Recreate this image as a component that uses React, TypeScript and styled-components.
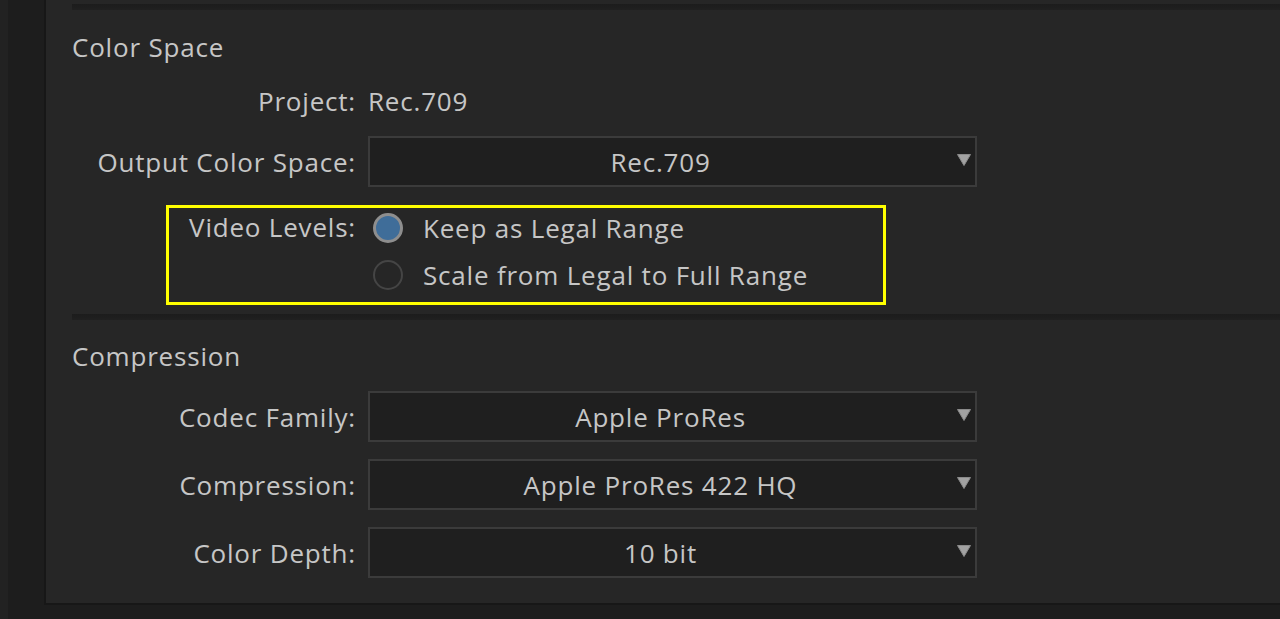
import React from 'react';
import styled, { createGlobalStyle } from 'styled-components';

const GlobalStyle = createGlobalStyle`
  html, body {
    margin: 0;
    padding: 0;
    background: #1d1d1d;
    overflow: hidden;
  }
  body {
    font-family: "Open Sans", "Noto Sans", "DejaVu Sans", sans-serif;
    color: #c6c6c6;
    letter-spacing: 0.8px;
  }
`;

const FormRow = ({ label, gap, children }: { label: string; gap: number; children: React.ReactNode }) => (
  <Row $gap={gap}>
    <Label>{label}</Label>
    {children}
  </Row>
);

const Select = ({ value }: { value: string }) => (
  <SelectBox>
    <SelectValue>{value}</SelectValue>
    <Arrow viewBox="0 0 14 12">
      <path d="M0.5 0.5 H13.5 L7 11.5 Z" fill="#a2a2a2" stroke="#8a8a8a" strokeWidth="1" strokeLinejoin="round" />
    </Arrow>
  </SelectBox>
);

export default function App() {
  return (
    <>
      <GlobalStyle />
      <Page>
        <Gutter />
        <Column>
          <Panel>
            <Separator />
            <Heading>Color Space</Heading>
            <PlainRow>
              <Label>Project:</Label>
              <Value>Rec.709</Value>
            </PlainRow>
            <FormRow label="Output Color Space:" gap={19}>
              <Select value="Rec.709" />
            </FormRow>
            <LevelsRow>
              <Label>Video Levels:</Label>
              <Options>
                <Option>
                  <Radio $checked />
                  <span>Keep as Legal Range</span>
                </Option>
                <Option>
                  <Radio />
                  <span>Scale from Legal to Full Range</span>
                </Option>
              </Options>
              <Highlight />
            </LevelsRow>
            <Separator $gap={23} />
            <Heading $gap={20}>Compression</Heading>
            <FormRow label="Codec Family:" gap={19}>
              <Select value="Apple ProRes" />
            </FormRow>
            <FormRow label="Compression:" gap={17}>
              <Select value="Apple ProRes 422 HQ" />
            </FormRow>
            <FormRow label="Color Depth:" gap={17}>
              <Select value="10 bit" />
            </FormRow>
          </Panel>
        </Column>
      </Page>
    </>
  );
}

const Page = styled.div`
  display: flex;
  width: 1280px;
  height: 619px;
  background: #1d1d1d;
`;

const Gutter = styled.div`
  width: 36px;
  flex-shrink: 0;
  border-left: 8px solid #222222;
`;

const Column = styled.div`
  flex: 1;
  display: flex;
  flex-direction: column;
`;

const Panel = styled.div`
  background: #262626;
  border-left: 2px solid #171717;
  border-bottom: 2px solid #171717;
  padding: 0 0 25px 26px;
  display: flex;
  flex-direction: column;
`;

const Separator = styled.div<{ $gap?: number }>`
  margin-top: ${p => p.$gap ?? 4}px;
  height: 6px;
  background: linear-gradient(#1c1c1c, #202020);
`;

const Heading = styled.div<{ $gap?: number }>`
  margin-top: ${p => p.$gap ?? 21}px;
  height: 32px;
  line-height: 32px;
  font-size: 26px;
`;

const Row = styled.div<{ $gap: number }>`
  display: grid;
  grid-template-columns: 284px 609px;
  column-gap: 12px;
  align-items: center;
  margin-top: ${p => p.$gap}px;
`;

const PlainRow = styled.div`
  display: grid;
  grid-template-columns: 284px auto;
  column-gap: 12px;
  align-items: center;
  margin-top: 22px;
  height: 32px;
`;

const Label = styled.div`
  text-align: right;
  font-size: 26px;
  line-height: 30px;
  white-space: nowrap;
`;

const Value = styled.div`
  font-size: 26px;
  line-height: 32px;
`;

const SelectBox = styled.div`
  position: relative;
  box-sizing: border-box;
  height: 51px;
  padding: 0 24px 0 0;
  background: #1f1f1f;
  border: 2px solid #3b3b3b;
  display: flex;
  align-items: center;
  justify-content: center;
`;

const SelectValue = styled.span`
  font-size: 26px;
`;

const Arrow = styled.svg`
  position: absolute;
  right: 4px;
  top: 16px;
  width: 14px;
  height: 12px;
`;

const LevelsRow = styled.div`
  position: relative;
  display: grid;
  grid-template-columns: 284px auto;
  column-gap: 12px;
  align-items: start;
  margin-top: 25px;
`;

const Options = styled.div`
  display: flex;
  flex-direction: column;
  gap: 15px;
`;

const Option = styled.div`
  display: flex;
  align-items: center;
  gap: 20px;
  height: 32px;
  font-size: 26px;
  padding-left: 5px;
`;

const Radio = styled.span<{ $checked?: boolean }>`
  box-sizing: border-box;
  width: 30px;
  height: 30px;
  border-radius: 50%;
  flex-shrink: 0;
  border: ${p => (p.$checked ? '3px solid #8e8e8e' : '2px solid #454545')};
  background: ${p => (p.$checked ? '#3f6d99' : '#262626')};
`;

const Highlight = styled.div`
  position: absolute;
  left: 94px;
  top: -7px;
  width: 720px;
  height: 100px;
  box-sizing: border-box;
  border: 3px solid #ffff00;
  pointer-events: none;
`;
